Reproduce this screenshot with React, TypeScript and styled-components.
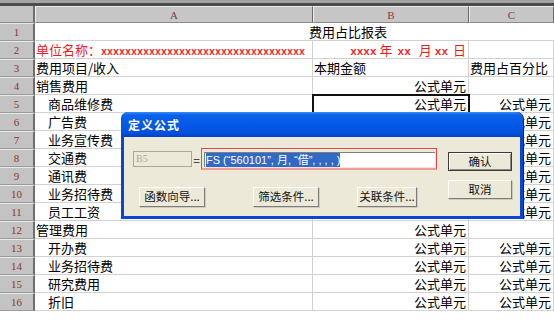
import styled, {createGlobalStyle} from 'styled-components'

const GlobalStyle = createGlobalStyle`
    html, body {
        margin: 0;
        padding: 0;
        background: #fff;
    }
    body {
        font-family: "Noto Sans CJK SC", "Liberation Sans", sans-serif;
        overflow: hidden;
    }
`

const COLS = '35px 278px 156px 85px'

type RowData = {
    a: string
    indent?: boolean
    b?: string
    c?: string
}

const bodyRows: RowData[] = [
    {a: '销售费用', b: '公式单元'},
    {a: '商品维修费', indent: true, b: '公式单元', c: '公式单元'},
    {a: '广告费', indent: true, b: '公式单元', c: '公式单元'},
    {a: '业务宣传费', indent: true, b: '公式单元', c: '公式单元'},
    {a: '交通费', indent: true, b: '公式单元', c: '公式单元'},
    {a: '通讯费', indent: true, b: '公式单元', c: '公式单元'},
    {a: '业务招待费', indent: true, b: '公式单元', c: '公式单元'},
    {a: '员工工资', indent: true, b: '公式单元', c: '公式单元'},
    {a: '管理费用', b: '公式单元'},
    {a: '开办费', indent: true, b: '公式单元', c: '公式单元'},
    {a: '业务招待费', indent: true, b: '公式单元', c: '公式单元'},
    {a: '研究费用', indent: true, b: '公式单元', c: '公式单元'},
    {a: '折旧', indent: true, b: '公式单元', c: '公式单元'},
]

export default function App() {
    return (
        <Sheet>
            <GlobalStyle />
            <TopStrip />
            <HeaderRow>
                <Corner />
                <ColHead>A</ColHead>
                <ColHead>B</ColHead>
                <ColHead>C</ColHead>
            </HeaderRow>

            <Row>
                <RowHead>1</RowHead>
                <MergedCell>费用占比报表</MergedCell>
            </Row>
            <Row>
                <RowHead>2</RowHead>
                <Cell $red>
                    单位名称：<Mono>xxxxxxxxxxxxxxxxxxxxxxxxxxxxxxxxxx</Mono>
                </Cell>
                <Cell $red $right>
                    <Mono $size={11}>xxxx</Mono>
                    <DateUnit $l={3} $r={5}>年</DateUnit>
                    <Mono $size={11}>xx</Mono>
                    <DateUnit $l={8} $r={3}>月</DateUnit>
                    <Mono $size={11}>xx</Mono>
                    <DateUnit $l={5} $r={0}>日</DateUnit>
                </Cell>
                <Cell />
            </Row>
            <Row>
                <RowHead>3</RowHead>
                <Cell>费用项目/收入</Cell>
                <Cell>本期金额</Cell>
                <Cell>费用占百分比</Cell>
            </Row>
            {bodyRows.map((r, i) => (
                <Row key={i}>
                    <RowHead>{i + 4}</RowHead>
                    <Cell $indent={r.indent}>{r.a}</Cell>
                    <Cell $right $selected={i === 1}>
                        {r.b}
                    </Cell>
                    <Cell $right>{r.c}</Cell>
                </Row>
            ))}

            <Dialog>
                <TitleBar>定义公式</TitleBar>
                <DialogBody>
                    <LeftPane>
                        <FormulaRow>
                            <CellRef>B5</CellRef>
                            <Eq>=</Eq>
                            <FormulaBox>
                                <FormulaInput>
                                    <Selected>FS (“560101”, 月, “借”, , , , )</Selected>
                                </FormulaInput>
                            </FormulaBox>
                        </FormulaRow>
                        <ButtonRow>
                            <Btn $w={66}>函数向导...</Btn>
                            <Btn $w={66} $before={48}>
                                筛选条件...
                            </Btn>
                            <Btn $w={60} $before={38}>
                                关联条件...
                            </Btn>
                        </ButtonRow>
                    </LeftPane>
                    <RightPane>
                        <Btn $w={64} $h={19} $default>
                            确认
                        </Btn>
                        <Btn $w={64} $h={19}>
                            取消
                        </Btn>
                    </RightPane>
                </DialogBody>
            </Dialog>
        </Sheet>
    )
}

const Sheet = styled.div`
    position: relative;
    width: 554px;
    height: 321px;
    overflow: hidden;
    background: #fff;
`

const TopStrip = styled.div`
    height: 6px;
    background: linear-gradient(#a4a4a4 0 3px, #4c4c4c 3px 6px);
`

const HeaderRow = styled.div`
    display: grid;
    grid-template-columns: ${COLS};
    height: 17px;
`

const Corner = styled.div`
    background: #c4c4c4;
    border-right: 2px solid #6e6e6e;
    border-bottom: 1px solid #8a8a8a;
    box-sizing: border-box;
`

const ColHead = styled.div`
    box-sizing: border-box;
    background: #c6c6c6;
    border-top: 1px solid #ededed;
    border-left: 1px solid #ededed;
    border-right: 1px solid #6a6a6a;
    border-bottom: 1px solid #8a8a8a;
    color: #8b3a3a;
    font-family: "Liberation Serif", serif;
    font-size: 11px;
    display: flex;
    align-items: center;
    justify-content: center;
`

const Row = styled.div`
    display: grid;
    grid-template-columns: ${COLS};
    height: 18px;
`

const RowHead = styled.div`
    box-sizing: border-box;
    background: #c3c3c3;
    border-top: 1px solid #e8e8e8;
    border-bottom: 1px solid #9a9a9a;
    border-right: 2px solid #6e6e6e;
    color: #8e3434;
    font-family: "Liberation Serif", serif;
    font-size: 11px;
    display: flex;
    align-items: center;
    justify-content: center;
`

const Cell = styled.div<{$right?: boolean; $indent?: boolean; $red?: boolean; $selected?: boolean}>`
    box-sizing: border-box;
    border-right: 1px solid #d2d2d2;
    border-bottom: 1px solid #d2d2d2;
    font-size: 13px;
    line-height: 17px;
    white-space: nowrap;
    overflow: hidden;
    color: ${({$red}) => ($red ? '#f01c1c' : '#000')};
    text-align: ${({$right}) => ($right ? 'right' : 'left')};
    padding: ${({$right, $indent}) => ($right ? '0 2px 0 0' : $indent ? '0 0 0 13px' : '0 0 0 1px')};
    outline: ${({$selected}) => ($selected ? '2px solid #111' : 'none')};
    outline-offset: -1px;
    position: ${({$selected}) => ($selected ? 'relative' : 'static')};
    z-index: ${({$selected}) => ($selected ? 1 : 'auto')};
`

const MergedCell = styled.div`
    grid-column: 2 / 5;
    box-sizing: border-box;
    border-bottom: 1px solid #d2d2d2;
    font-size: 13px;
    line-height: 17px;
    padding-left: 274px;
    white-space: nowrap;
`

const Mono = styled.span<{$size?: number}>`
    font-family: "Liberation Mono", monospace;
    font-size: ${({$size}) => $size ?? 10}px;
    font-weight: bold;
    white-space: pre;
`

const DateUnit = styled.span<{$l: number; $r: number}>`
    margin: 0 ${({$r}) => $r}px 0 ${({$l}) => $l}px;
`

const Dialog = styled.div`
    position: absolute;
    left: 121px;
    top: 112px;
    width: 402px;
    box-sizing: border-box;
    padding: 0 3px 3px;
    border-radius: 7px 7px 0 0;
    background: #0a46d2;
    box-shadow: 1px 0 0 #222;
    z-index: 5;
`

const TitleBar = styled.div`
    height: 25px;
    margin: 0 -3px;
    padding-left: 7px;
    border-radius: 7px 7px 0 0;
    background: linear-gradient(#3a8cf6 0, #0b62ea 3px, #0458e6 55%, #0250dc 85%, #0440c0 100%);
    color: #fff;
    font-size: 12px;
    font-weight: bold;
    display: flex;
    align-items: center;
    letter-spacing: 1px;
`

const DialogBody = styled.div`
    height: 79px;
    background: #ece9d8;
    display: flex;
    padding: 0 8px 0 9px;
`

const LeftPane = styled.div`
    display: flex;
    flex-direction: column;
`

const FormulaRow = styled.div`
    margin-top: 11px;
    height: 22px;
    display: flex;
    align-items: center;
`

const CellRef = styled.div`
    box-sizing: border-box;
    width: 59px;
    height: 16px;
    border: 1px solid #a9a79c;
    color: #a8a8a8;
    font-family: "Liberation Serif", serif;
    font-size: 10px;
    line-height: 14px;
    padding-left: 2px;
`

const Eq = styled.span`
    width: 9px;
    text-align: center;
    font-size: 12px;
    color: #222;
`

const FormulaBox = styled.div`
    box-sizing: border-box;
    width: 236px;
    height: 22px;
    border: 1px solid #e84545;
    border-bottom: 2px solid #f49a9a;
    padding: 3px 1px 1px 2px;
    display: flex;
`

const FormulaInput = styled.div`
    flex: 1;
    background: #fff;
    border-top: 1px solid #7f7f7f;
    border-left: 1px solid #7f7f7f;
    padding: 0 0 0 1px;
    display: flex;
    align-items: center;
    overflow: hidden;
`

const Selected = styled.span`
    background: #316ac5;
    color: #fff;
    font-family: "Liberation Sans", "Noto Sans CJK SC", sans-serif;
    font-size: 11px;
    line-height: 14px;
    white-space: pre;
`

const ButtonRow = styled.div`
    margin-top: 17px;
    padding-left: 6px;
    display: flex;
`

const RightPane = styled.div`
    margin-left: 11px;
    margin-top: 15px;
    display: flex;
    flex-direction: column;
    gap: 9px;
`

const Btn = styled.button<{$w: number; $h?: number; $before?: number; $default?: boolean}>`
    box-sizing: border-box;
    width: ${({$w}) => $w}px;
    height: ${({$h}) => $h ?? 20}px;
    margin-left: ${({$before}) => $before ?? 0}px;
    padding: 0;
    background: #ece9d8;
    border: 1px solid;
    border-color: ${({$default}) => ($default ? '#3a3a3a' : '#ffffff #7c7c7c #7c7c7c #ffffff')};
    box-shadow: ${({$default}) =>
        $default ? 'inset 1px 1px 0 #fff, inset -1px -1px 0 #8a8a8a' : '1px 1px 0 #cfccbd'};
    font-family: "Noto Sans CJK SC", sans-serif;
    font-size: 11.5px;
    color: #111;
    line-height: 1;
`
